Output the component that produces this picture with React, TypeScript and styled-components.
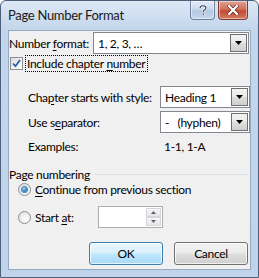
import styled, { createGlobalStyle, css } from "styled-components";

const GlobalStyle = createGlobalStyle`
  html, body {
    margin: 0;
    padding: 0;
    background: #ffffff;
  }
  body {
    font-family: Lato, "Noto Sans", sans-serif;
    font-size: 12px;
    line-height: 15px;
    letter-spacing: -0.3px;
    color: #000000;
  }
`;

const Window = styled.div`
  width: 259px;
  height: 278px;
  box-sizing: border-box;
  display: flex;
  flex-direction: column;
  border: 1px solid #4d6079;
  border-radius: 6px 6px 0 0;
  background: linear-gradient(to bottom, #dde8f5 0px, #c4d6ec 28px, #bfd3eb 100%);
  overflow: hidden;
`;

const TitleBar = styled.div`
  height: 29px;
  flex-shrink: 0;
  display: flex;
  align-items: flex-start;
  justify-content: space-between;
  padding: 0 10px 0 7px;
  box-sizing: border-box;
`;

const Title = styled.div`
  margin-top: 7px;
  font-size: 13px;
  color: #1a1a1a;
`;

const Caption = styled.div`
  display: flex;
  gap: 3px;
`;

const CaptionButton = styled.div<{ $close?: boolean }>`
  width: ${(p) => (p.$close ? 30 : 25)}px;
  height: 19px;
  box-sizing: border-box;
  display: flex;
  align-items: center;
  justify-content: center;
  border: 1px solid ${(p) => (p.$close ? "#7a3b33" : "#6e829c")};
  border-top: none;
  border-radius: 0 0 4px 4px;
  background: ${(p) =>
    p.$close
      ? "linear-gradient(to bottom, #e3a597 0%, #d26f5c 45%, #c24a33 55%, #d77a62 100%)"
      : "linear-gradient(to bottom, #e4edf8 0%, #c9d9ee 45%, #b5c9e3 55%, #c7d8ee 100%)"};
  box-shadow: inset 0 0 0 1px rgba(255, 255, 255, 0.45);
`;

const Client = styled.div`
  flex: 1;
  min-height: 0;
  margin: 0 7px 7px 7px;
  background: #f0f0f0;
  border: 1px solid #98aac2;
  display: flex;
  flex-direction: column;
`;

const Row = styled.div<{ $top: number; $indent?: number; $height?: number }>`
  display: flex;
  align-items: center;
  flex-shrink: 0;
  height: ${(p) => (p.$height ? `${p.$height}px` : "auto")};
  margin-top: ${(p) => p.$top}px;
  padding-left: ${(p) => p.$indent ?? 0}px;
`;

const Label = styled.div<{ $width: number }>`
  width: ${(p) => p.$width}px;
  flex-shrink: 0;
  white-space: nowrap;
`;

const Key = styled.span`
  text-decoration: underline;
  text-underline-offset: 2px;
`;

const Combo = styled.div<{ $width: number }>`
  width: ${(p) => p.$width}px;
  height: 22px;
  flex-shrink: 0;
  box-sizing: border-box;
  border: 1px solid #828790;
  background: #ffffff;
  display: flex;
  align-items: center;
  padding-left: 4px;
`;

const ComboText = styled.div`
  flex: 1;
  white-space: nowrap;
`;

const DropButton = styled.div`
  width: 17px;
  height: 18px;
  margin-right: 1px;
  box-sizing: border-box;
  border: 1px solid #707070;
  background: linear-gradient(to bottom, #f2f2f2 0%, #ebebeb 45%, #dddddd 55%, #cfcfcf 100%);
  display: flex;
  align-items: center;
  justify-content: center;
`;

const Arrow = () => (
  <svg width="7" height="4" viewBox="0 0 7 4">
    <path d="M0 0H7L3.5 4Z" fill="#000" />
  </svg>
);

const CheckBox = styled.div`
  width: 13px;
  height: 13px;
  box-sizing: border-box;
  border: 1px solid #8e8f8f;
  background: linear-gradient(135deg, #dcdcdc 0%, #f6f6f6 70%, #ffffff 100%);
  display: flex;
  align-items: center;
  justify-content: center;
  flex-shrink: 0;
`;

const FocusText = styled.div`
  margin-left: 2px;
  padding: 0 2px 0 1px;
  border: 1px dotted #000000;
  white-space: nowrap;
`;

const Radio = styled.div<{ $on?: boolean }>`
  width: 13px;
  height: 13px;
  box-sizing: border-box;
  border-radius: 50%;
  border: 1px solid #8e8f8f;
  background: radial-gradient(circle at 60% 65%, #ffffff 0%, #f2f2f2 40%, #d3d3d3 100%);
  display: flex;
  align-items: center;
  justify-content: center;
  flex-shrink: 0;
  margin-right: 4px;
  ${(p) =>
    p.$on &&
    css`
      &::after {
        content: "";
        width: 5px;
        height: 5px;
        border-radius: 50%;
        background: radial-gradient(circle at 40% 35%, #9ad3f5 0%, #2c7fbf 60%, #1a5c99 100%);
        box-shadow: 0 0 0 1px #4f8ab9;
      }
    `}
`;

const GroupLine = styled.div`
  flex: 1;
  height: 0;
  border-top: 1px solid #d5dfe5;
  margin: 1px 2px 0 5px;
`;

const Spin = styled.div`
  width: 65px;
  height: 22px;
  box-sizing: border-box;
  border: 1px solid #abadb3;
  background: #ffffff;
  display: flex;
  justify-content: flex-end;
  padding: 1px;
`;

const SpinButtons = styled.div`
  width: 15px;
  display: flex;
  flex-direction: column;
`;

const SpinPart = styled.div`
  flex: 1;
  box-sizing: border-box;
  border: 1px solid #d6d6d6;
  background: linear-gradient(to bottom, #f7f7f7, #e6e6e6);
  display: flex;
  align-items: center;
  justify-content: center;
`;

const Footer = styled.div`
  display: flex;
  flex-shrink: 0;
  justify-content: flex-end;
  gap: 11px;
  margin-top: 14px;
  padding-right: 2px;
`;

const Button = styled.div<{ $default?: boolean }>`
  width: 74px;
  height: 23px;
  box-sizing: border-box;
  border-radius: 3px;
  border: 1px solid ${(p) => (p.$default ? "#3c7fb1" : "#707070")};
  background: ${(p) =>
    p.$default
      ? "linear-gradient(to bottom, #eaf6fd 0%, #d9f0fc 45%, #bee6fd 55%, #a7d9f5 100%)"
      : "linear-gradient(to bottom, #f2f2f2 0%, #ebebeb 45%, #dddddd 55%, #cfcfcf 100%)"};
  box-shadow: inset 0 0 0 1px rgba(255, 255, 255, 0.7);
  display: flex;
  align-items: center;
  justify-content: center;
`;

export default function App() {
  return (
    <>
      <GlobalStyle />
      <Window>
        <TitleBar>
          <Title>Page Number Format</Title>
          <Caption>
            <CaptionButton>
              <svg width="8" height="11" viewBox="0 0 8 11">
                <path
                  d="M1 3C1 1.5 2.3 0.8 4 0.8C5.8 0.8 7 1.7 7 3.1C7 4.6 5 5 4.2 6.2V7.3M4.2 8.6V10"
                  stroke="#ffffff"
                  strokeWidth="2.4"
                  fill="none"
                />
                <path
                  d="M1 3C1 1.5 2.3 0.8 4 0.8C5.8 0.8 7 1.7 7 3.1C7 4.6 5 5 4.2 6.2V7.3M4.2 8.6V10"
                  stroke="#2d3f5a"
                  strokeWidth="1.1"
                  fill="none"
                />
              </svg>
            </CaptionButton>
            <CaptionButton $close>
              <svg width="12" height="10" viewBox="0 0 12 10">
                <path d="M2 1L10 9M10 1L2 9" stroke="#6a2a22" strokeWidth="3.6" strokeLinecap="square" />
                <path d="M2 1L10 9M10 1L2 9" stroke="#ffffff" strokeWidth="2.2" strokeLinecap="square" />
              </svg>
            </CaptionButton>
          </Caption>
        </TitleBar>
        <Client>
          <Row $top={1}>
            <Label $width={84}>
              Number <Key>f</Key>ormat:
            </Label>
            <Combo $width={156}>
              <ComboText>1, 2, 3, …</ComboText>
              <DropButton>
                <Arrow />
              </DropButton>
            </Combo>
          </Row>
          <Row $top={1} $indent={1} $height={16}>
            <CheckBox>
              <svg width="9" height="9" viewBox="0 0 9 9">
                <path d="M1 4.5L3.5 7.2L8 1" stroke="#2a5fa8" strokeWidth="1.8" fill="none" />
              </svg>
            </CheckBox>
            <FocusText>
              Include chapter <Key>n</Key>umber
            </FocusText>
          </Row>
          <Row $top={15} $indent={19}>
            <Label $width={132}>
              Cha<Key>p</Key>ter starts with style:
            </Label>
            <Combo $width={90}>
              <ComboText>Heading 1</ComboText>
              <DropButton>
                <Arrow />
              </DropButton>
            </Combo>
          </Row>
          <Row $top={3} $indent={19}>
            <Label $width={132}>
              Use s<Key>e</Key>parator:
            </Label>
            <Combo $width={90}>
              <ComboText>-&nbsp;&nbsp;&nbsp;(hyphen)</ComboText>
              <DropButton>
                <Arrow />
              </DropButton>
            </Combo>
          </Row>
          <Row $top={6} $indent={19} $height={15}>
            <Label $width={136}>Examples:</Label>
            <div>1-1, 1-A</div>
          </Row>
          <Row $top={13} $height={14}>
            <span>Page numbering</span>
            <GroupLine />
          </Row>
          <Row $top={1} $indent={9} $height={15}>
            <Radio $on />
            <span>
              <Key>C</Key>ontinue from previous section
            </span>
          </Row>
          <Row $top={9} $indent={9}>
            <Radio />
            <Label $width={63}>
              Start <Key>a</Key>t:
            </Label>
            <Spin>
              <SpinButtons>
                <SpinPart>
                  <svg width="5" height="3" viewBox="0 0 5 3">
                    <path d="M0 3H5L2.5 0Z" fill="#4d6185" />
                  </svg>
                </SpinPart>
                <SpinPart>
                  <svg width="5" height="3" viewBox="0 0 5 3">
                    <path d="M0 0H5L2.5 3Z" fill="#4d6185" />
                  </svg>
                </SpinPart>
              </SpinButtons>
            </Spin>
          </Row>
          <Footer>
            <Button $default>OK</Button>
            <Button>Cancel</Button>
          </Footer>
        </Client>
      </Window>
    </>
  );
}
